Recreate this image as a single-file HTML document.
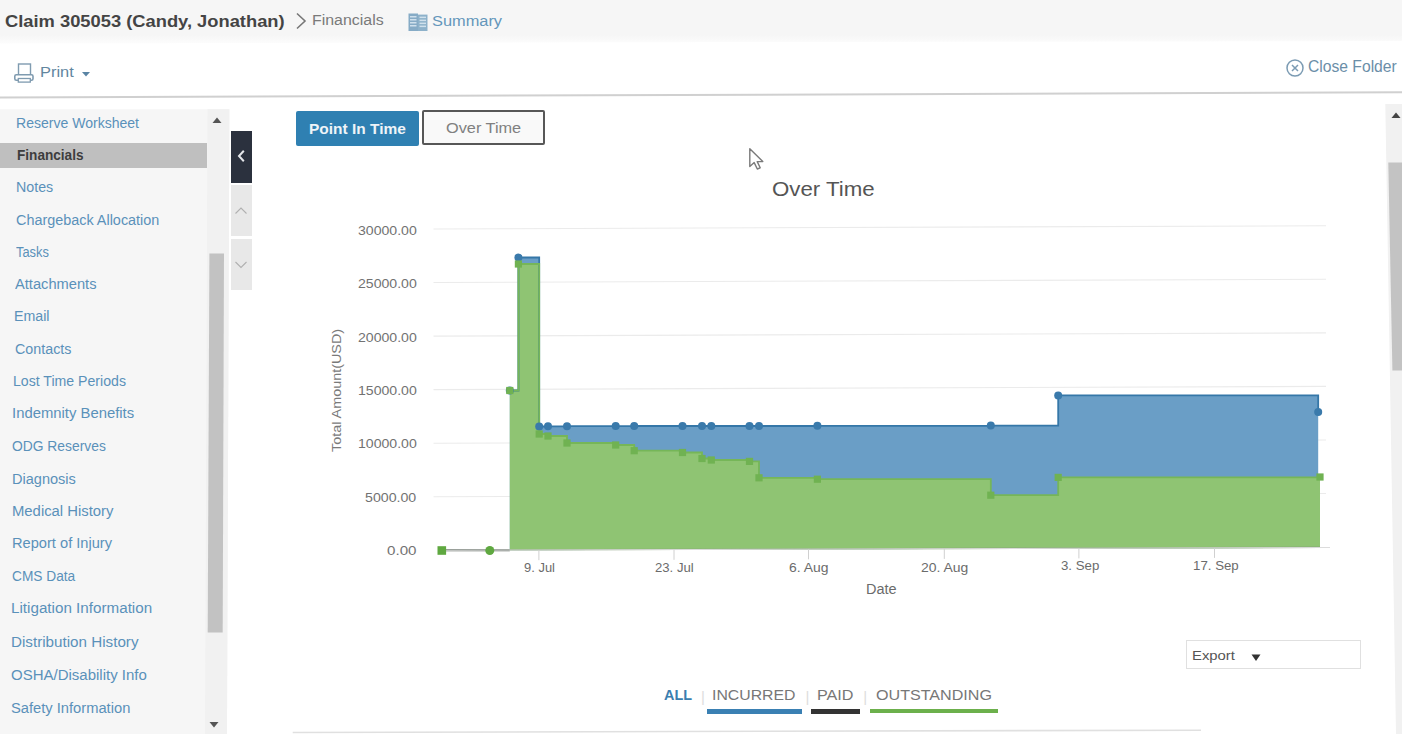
<!DOCTYPE html>
<html><head><meta charset="utf-8">
<style>
html,body{margin:0;padding:0;}
body{width:1402px;height:734px;overflow:hidden;position:relative;background:#fff;font-family:"Liberation Sans",sans-serif;}
.abs{position:absolute;}
.t{position:absolute;white-space:nowrap;}
#hdr{position:absolute;left:0;top:0;width:1402px;height:42px;background:#f4f4f4;}
#navbg{position:absolute;left:0;top:109px;width:229px;height:625px;background:#f4f4f4;}
.nsel{position:absolute;left:0;width:207px;height:25px;background:#bfbfbf;}
#nscroll{position:absolute;left:207px;top:109px;width:22px;height:625px;background:#f0f0f0;}
#nthumb{position:absolute;left:208.5px;top:253.5px;width:15px;height:379px;background:#c2c2c2;}
#collapse{position:absolute;left:231px;top:130.5px;width:20.5px;height:52px;background:#2b313e;}
.ud{position:absolute;left:231px;width:20.5px;height:51px;background:#e8e8e8;}
#pit{position:absolute;left:295.5px;top:110.5px;width:123px;height:35px;background:#2f80b2;border-radius:2px;}
#ot{position:absolute;left:421.7px;top:110px;width:119.5px;height:30.7px;border:2px solid #575757;background:#f9f9f9;border-radius:2px;}
.chart{position:absolute;left:0;top:0;}
#export{position:absolute;left:1186px;top:640px;width:173px;height:26.5px;border:1px solid #e0e0e0;background:#fff;}
#rscroll{position:absolute;left:1386px;top:103px;width:16px;height:631px;background:#f1f1f1;}
#rthumb{position:absolute;left:1389px;top:163px;width:13px;height:207px;background:#c4c4c4;}
</style></head><body>
<svg class="abs" style="left:0;top:0" width="1402" height="50"><defs><linearGradient id="hg" x1="0" y1="0" x2="0" y2="50" gradientUnits="userSpaceOnUse"><stop offset="0.70" stop-color="#f6f6f6"/><stop offset="0.86" stop-color="#fcfcfc"/></linearGradient></defs><polygon points="0,0 1402,0 1402,41 0,43.4" fill="url(#hg)"/></svg>
<div class="t " style="left:5.00px;top:11.00px;font-size:16.8px;line-height:21px;font-weight:bold;color:#444444;letter-spacing:0.000px;transform:scaleX(1.0917);transform-origin:0 0;">Claim 305053 (Candy, Jonathan)</div>
<svg class="abs" style="left:294px;top:12px" width="14" height="18" viewBox="0 0 14 18"><path d="M3,1.5 L11,9 L3,16.5" fill="none" stroke="#777" stroke-width="1.6"/></svg>
<div class="t " style="left:311.76px;top:11.00px;font-size:14px;line-height:18px;font-weight:normal;color:#7a7a7a;letter-spacing:0.000px;transform:scaleX(1.1366);transform-origin:0 0;">Financials</div>
<svg class="abs" style="left:408px;top:12.5px" width="20" height="19" viewBox="0 0 20 19"><rect x="0.5" y="0.5" width="9.5" height="17.5" fill="#86abc6"/><rect x="10" y="1.6" width="9.5" height="16.4" fill="#8db1ca"/><rect x="2" y="3" width="6.5" height="1.5" fill="#cfe0ec"/><rect x="11.5" y="3.6" width="6.5" height="1.5" fill="#cfe0ec"/><rect x="2" y="6" width="6.5" height="1.5" fill="#cfe0ec"/><rect x="11.5" y="6.6" width="6.5" height="1.5" fill="#cfe0ec"/><rect x="2" y="9" width="6.5" height="1.5" fill="#cfe0ec"/><rect x="11.5" y="9.6" width="6.5" height="1.5" fill="#cfe0ec"/><rect x="2" y="12" width="6.5" height="1.5" fill="#cfe0ec"/><rect x="11.5" y="12.6" width="6.5" height="1.5" fill="#cfe0ec"/></svg>
<div class="t " style="left:431.60px;top:11.00px;font-size:15.3px;line-height:19px;font-weight:normal;color:#6496bb;letter-spacing:0.000px;transform:scaleX(1.0700);transform-origin:0 0;">Summary</div>
<svg class="abs" style="left:12px;top:60px" width="24" height="26" viewBox="0 0 24 26"><rect x="6.5" y="4" width="12" height="11" fill="none" stroke="#7f9bb0" stroke-width="1.4"/><rect x="2.8" y="14.8" width="18.2" height="5.5" rx="1.5" fill="#fff" stroke="#7f9bb0" stroke-width="1.6"/><rect x="6.3" y="18.5" width="12" height="3.6" fill="#fff" stroke="#7f9bb0" stroke-width="1.3"/></svg>
<div class="t " style="left:39.93px;top:62.30px;font-size:15.3px;line-height:19px;font-weight:normal;color:#62869f;letter-spacing:0.000px;transform:scaleX(1.0736);transform-origin:0 0;">Print</div>
<svg class="abs" style="left:81px;top:71px" width="10" height="6" viewBox="0 0 10 6"><path d="M1,1 L9,1 L5,5.5 Z" fill="#5a84a4"/></svg>
<svg class="abs" style="left:1285px;top:58px" width="20" height="20" viewBox="0 0 20 20"><circle cx="10" cy="10" r="8" fill="none" stroke="#7b9bb3" stroke-width="1.5"/><path d="M7,7 L13,13 M13,7 L7,13" stroke="#7b9bb3" stroke-width="1.5"/></svg>
<div class="t " style="left:1307.90px;top:57.20px;font-size:16px;line-height:20px;font-weight:normal;color:#6b8ea8;letter-spacing:0.000px;transform:scaleX(0.9784);transform-origin:0 0;">Close Folder</div>
<svg class="abs" style="left:0;top:88px" width="1402" height="14"><line x1="0" y1="9.5" x2="1402" y2="4.3" stroke="#d0d0d0" stroke-width="2"/></svg>
<svg class="abs" style="left:0;top:100px" width="240" height="634"><polygon points="0,9.3 229.4,9.3 227,634 0,634" fill="#f6f6f6"/></svg>
<div class="nsel" style="top:143px"></div>
<div class="t " style="left:15.90px;top:113.70px;font-size:14px;line-height:18px;font-weight:normal;color:#5a91ba;letter-spacing:0.000px;transform:scaleX(1.0026);transform-origin:0 0;">Reserve Worksheet</div>
<div class="t " style="left:16.60px;top:146.60px;font-size:13.8px;line-height:17px;font-weight:bold;color:#3d3d3d;letter-spacing:0.000px;transform:scaleX(0.9852);transform-origin:0 0;">Financials</div>
<div class="t " style="left:15.88px;top:178.20px;font-size:14px;line-height:18px;font-weight:normal;color:#5a91ba;letter-spacing:0.000px;transform:scaleX(1.0176);transform-origin:0 0;">Notes</div>
<div class="t " style="left:16.10px;top:210.70px;font-size:14px;line-height:18px;font-weight:normal;color:#5a91ba;letter-spacing:0.000px;transform:scaleX(1.0287);transform-origin:0 0;">Chargeback Allocation</div>
<div class="t " style="left:15.60px;top:242.70px;font-size:14px;line-height:18px;font-weight:normal;color:#5a91ba;letter-spacing:0.000px;transform:scaleX(0.9166);transform-origin:0 0;">Tasks</div>
<div class="t " style="left:14.80px;top:275.00px;font-size:14px;line-height:18px;font-weight:normal;color:#5a91ba;letter-spacing:0.000px;transform:scaleX(1.0474);transform-origin:0 0;">Attachments</div>
<div class="t " style="left:13.79px;top:307.40px;font-size:14px;line-height:18px;font-weight:normal;color:#5a91ba;letter-spacing:0.000px;transform:scaleX(1.0149);transform-origin:0 0;">Email</div>
<div class="t " style="left:14.80px;top:339.70px;font-size:14px;line-height:18px;font-weight:normal;color:#5a91ba;letter-spacing:0.000px;transform:scaleX(1.0209);transform-origin:0 0;">Contacts</div>
<div class="t " style="left:13.09px;top:372.10px;font-size:14px;line-height:18px;font-weight:normal;color:#5a91ba;letter-spacing:0.000px;transform:scaleX(1.0081);transform-origin:0 0;">Lost Time Periods</div>
<div class="t " style="left:12.44px;top:403.90px;font-size:14px;line-height:18px;font-weight:normal;color:#5a91ba;letter-spacing:0.000px;transform:scaleX(1.0607);transform-origin:0 0;">Indemnity Benefits</div>
<div class="t " style="left:12.30px;top:436.90px;font-size:14px;line-height:18px;font-weight:normal;color:#5a91ba;letter-spacing:0.000px;transform:scaleX(0.9883);transform-origin:0 0;">ODG Reserves</div>
<div class="t " style="left:12.46px;top:469.50px;font-size:14px;line-height:18px;font-weight:normal;color:#5a91ba;letter-spacing:0.000px;transform:scaleX(1.0384);transform-origin:0 0;">Diagnosis</div>
<div class="t " style="left:11.94px;top:502.40px;font-size:14px;line-height:18px;font-weight:normal;color:#5a91ba;letter-spacing:0.000px;transform:scaleX(1.0603);transform-origin:0 0;">Medical History</div>
<div class="t " style="left:11.75px;top:534.20px;font-size:14px;line-height:18px;font-weight:normal;color:#5a91ba;letter-spacing:0.000px;transform:scaleX(1.0453);transform-origin:0 0;">Report of Injury</div>
<div class="t " style="left:12.20px;top:567.10px;font-size:14px;line-height:18px;font-weight:normal;color:#5a91ba;letter-spacing:0.000px;transform:scaleX(0.9786);transform-origin:0 0;">CMS Data</div>
<div class="t " style="left:11.11px;top:599.40px;font-size:14px;line-height:18px;font-weight:normal;color:#5a91ba;letter-spacing:0.000px;transform:scaleX(1.0860);transform-origin:0 0;">Litigation Information</div>
<div class="t " style="left:10.71px;top:632.90px;font-size:14px;line-height:18px;font-weight:normal;color:#5a91ba;letter-spacing:0.000px;transform:scaleX(1.0852);transform-origin:0 0;">Distribution History</div>
<div class="t " style="left:10.60px;top:665.50px;font-size:14px;line-height:18px;font-weight:normal;color:#5a91ba;letter-spacing:0.000px;transform:scaleX(1.0714);transform-origin:0 0;">OSHA/Disability Info</div>
<div class="t " style="left:11.20px;top:698.60px;font-size:14px;line-height:18px;font-weight:normal;color:#5a91ba;letter-spacing:0.000px;transform:scaleX(1.0503);transform-origin:0 0;">Safety Information</div>
<svg class="abs" style="left:0;top:100px" width="240" height="634"><polygon points="207.5,9.3 229.4,9.3 227,634 205,634" fill="#f1f1f1"/><polygon points="209.4,153.6 224,153.6 222.7,532.4 207.7,532.4" fill="#c2c2c2"/></svg>
<svg class="abs" style="left:211px;top:115px" width="12" height="10"><path d="M1.5,8 L6,2.5 L10.5,8 Z" fill="#555"/></svg>
<svg class="abs" style="left:208px;top:720px" width="12" height="10"><path d="M1.5,2 L6,7.5 L10.5,2 Z" fill="#555"/></svg>
<div id="collapse"></div>
<svg class="abs" style="left:234px;top:148px" width="14" height="16"><path d="M9.8,2.8 L5,8 L9.8,13.2" fill="none" stroke="#e4e6ea" stroke-width="2"/></svg>
<div class="ud" style="top:185px"></div>
<div class="ud" style="top:239px"></div>
<svg class="abs" style="left:234px;top:205px" width="14" height="12"><path d="M1.5,8.5 L7,3 L12.5,8.5" fill="none" stroke="#b0b0b0" stroke-width="1.1"/></svg>
<svg class="abs" style="left:234px;top:259px" width="14" height="12"><path d="M1.5,3 L7,8.5 L12.5,3" fill="none" stroke="#b0b0b0" stroke-width="1.1"/></svg>
<div id="pit"></div>
<div class="t " style="left:308.97px;top:118.70px;font-size:15px;line-height:19px;font-weight:bold;color:#eef4f8;letter-spacing:0.000px;transform:scaleX(1.0307);transform-origin:0 0;">Point In Time</div>
<div id="ot"></div>
<div class="t " style="left:446.40px;top:118.10px;font-size:15px;line-height:19px;font-weight:normal;color:#808080;letter-spacing:0.000px;transform:scaleX(1.0867);transform-origin:0 0;">Over Time</div>
<svg class="abs" style="left:748px;top:147px" width="18" height="26"><path d="M1.8,1.8 L1.8,19.5 L6.2,15.6 L9.3,22 L12.2,20.8 L9.2,14.6 L14.8,14.6 Z" fill="#fff" stroke="#7a7a7a" stroke-width="1.4" stroke-linejoin="round"/></svg>
<div class="t " style="left:772.30px;top:176.90px;font-size:20px;line-height:25px;font-weight:normal;color:#555;letter-spacing:0.000px;transform:scaleX(1.1138);transform-origin:0 0;">Over Time</div>
<svg class="chart" width="1402" height="734" viewBox="0 0 1402 734">
<line x1="433.5" y1="496.7" x2="1326" y2="493.5" stroke="#ebebeb" stroke-width="1.1"/>
<line x1="433.5" y1="443.2" x2="1326" y2="440.0" stroke="#ebebeb" stroke-width="1.1"/>
<line x1="433.5" y1="389.6" x2="1326" y2="386.4" stroke="#ebebeb" stroke-width="1.1"/>
<line x1="433.5" y1="336.1" x2="1326" y2="332.9" stroke="#ebebeb" stroke-width="1.1"/>
<line x1="433.5" y1="282.5" x2="1326" y2="279.3" stroke="#ebebeb" stroke-width="1.1"/>
<line x1="433.5" y1="229.0" x2="1326" y2="225.8" stroke="#ebebeb" stroke-width="1.1"/>
<path d="M509.8,550.36 L509.8,390.5 L518.4,390.5 L518.4,257.5 L539.2,257.5 L539.2,426.5 L548,426.5 L548,426.3 L567,426.3 L567,426.2 L615.7,426.2 L615.7,426.1 L634.2,426.1 L634.2,426 L682.5,426 L682.5,426 L702,426 L702,426 L711.3,426 L711.3,426 L749.5,426 L749.5,426 L759,426 L759,426 L817.4,426 L817.4,425.8 L990.8,425.8 L990.8,425.6 L1058.2,425.6 L1058.2,395.4 L1318.2,395.4 L1318.2,412 L1318.2,547.86 Z" fill="#6a9ec6"/>
<path d="M509.8,550.36 L509.8,390.5 L518.4,390.5 L518.4,264 L539.2,264 L539.2,434 L548,434 L548,436 L567,436 L567,443 L615.7,443 L615.7,445 L634.2,445 L634.2,450.7 L682.5,450.7 L682.5,452.5 L702,452.5 L702,458.5 L711.3,458.5 L711.3,460 L749.5,460 L749.5,461.4 L759,461.4 L759,477.8 L817.4,477.8 L817.4,479.2 L990.8,479.2 L990.8,495.2 L1058.2,495.2 L1058.2,477.4 L1320,477.4 L1320,477 L1320,547.85 Z" fill="#8fc473"/>
<path d="M509.8,390.5 L518.4,390.5 L518.4,257.5 L539.2,257.5 L539.2,426.5 L548,426.5 L548,426.3 L567,426.3 L567,426.2 L615.7,426.2 L615.7,426.1 L634.2,426.1 L634.2,426 L682.5,426 L682.5,426 L702,426 L702,426 L711.3,426 L711.3,426 L749.5,426 L749.5,426 L759,426 L759,426 L817.4,426 L817.4,425.8 L990.8,425.8 L990.8,425.6 L1058.2,425.6 L1058.2,395.4 L1318.2,395.4 L1318.2,412" fill="none" stroke="#3577a8" stroke-width="1.8"/>
<path d="M509.8,390.5 L518.4,390.5 L518.4,264 L539.2,264 L539.2,434 L548,434 L548,436 L567,436 L567,443 L615.7,443 L615.7,445 L634.2,445 L634.2,450.7 L682.5,450.7 L682.5,452.5 L702,452.5 L702,458.5 L711.3,458.5 L711.3,460 L749.5,460 L749.5,461.4 L759,461.4 L759,477.8 L817.4,477.8 L817.4,479.2 L990.8,479.2 L990.8,495.2 L1058.2,495.2 L1058.2,477.4 L1320,477.4 L1320,477" fill="none" stroke="#76b658" stroke-width="1.8"/>
<path d="M441.8,550.2 L509.8,550.2" stroke="#5f6a60" stroke-width="2"/>
<path d="M509.8,549.9 L1320,547.3" stroke="#86a878" stroke-width="1.4"/>
<line x1="446" y1="550.3" x2="1330" y2="547.5" stroke="#dcdcdc" stroke-width="1"/>
<line x1="538.9" y1="550.2" x2="538.9" y2="560.2" stroke="#d0d0d0" stroke-width="1"/>
<line x1="674" y1="549.8" x2="674" y2="559.8" stroke="#d0d0d0" stroke-width="1"/>
<line x1="808.5" y1="549.3" x2="808.5" y2="559.3" stroke="#d0d0d0" stroke-width="1"/>
<line x1="944.3" y1="548.9" x2="944.3" y2="558.9" stroke="#d0d0d0" stroke-width="1"/>
<line x1="1078.9" y1="548.4" x2="1078.9" y2="558.4" stroke="#d0d0d0" stroke-width="1"/>
<line x1="1214.5" y1="547.9" x2="1214.5" y2="557.9" stroke="#d0d0d0" stroke-width="1"/>
<circle cx="509.8" cy="390.5" r="4" fill="#3a7aab"/>
<circle cx="518.4" cy="257.5" r="4" fill="#3a7aab"/>
<circle cx="539.2" cy="426.5" r="4" fill="#3a7aab"/>
<circle cx="548" cy="426.3" r="4" fill="#3a7aab"/>
<circle cx="567" cy="426.2" r="4" fill="#3a7aab"/>
<circle cx="615.7" cy="426.1" r="4" fill="#3a7aab"/>
<circle cx="634.2" cy="426" r="4" fill="#3a7aab"/>
<circle cx="682.5" cy="426" r="4" fill="#3a7aab"/>
<circle cx="702" cy="426" r="4" fill="#3a7aab"/>
<circle cx="711.3" cy="426" r="4" fill="#3a7aab"/>
<circle cx="749.5" cy="426" r="4" fill="#3a7aab"/>
<circle cx="759" cy="426" r="4" fill="#3a7aab"/>
<circle cx="817.4" cy="425.8" r="4" fill="#3a7aab"/>
<circle cx="990.8" cy="425.6" r="4" fill="#3a7aab"/>
<circle cx="1058.2" cy="395.4" r="4" fill="#3a7aab"/>
<circle cx="1318.2" cy="412" r="4" fill="#3a7aab"/>
<rect x="506.2" y="386.9" width="7.2" height="7.2" fill="#70b252"/>
<rect x="514.8" y="260.4" width="7.2" height="7.2" fill="#70b252"/>
<rect x="535.6" y="430.4" width="7.2" height="7.2" fill="#70b252"/>
<rect x="544.4" y="432.4" width="7.2" height="7.2" fill="#70b252"/>
<rect x="563.4" y="439.4" width="7.2" height="7.2" fill="#70b252"/>
<rect x="612.1" y="441.4" width="7.2" height="7.2" fill="#70b252"/>
<rect x="630.6" y="447.09999999999997" width="7.2" height="7.2" fill="#70b252"/>
<rect x="678.9" y="448.9" width="7.2" height="7.2" fill="#70b252"/>
<rect x="698.4" y="454.9" width="7.2" height="7.2" fill="#70b252"/>
<rect x="707.6999999999999" y="456.4" width="7.2" height="7.2" fill="#70b252"/>
<rect x="745.9" y="457.79999999999995" width="7.2" height="7.2" fill="#70b252"/>
<rect x="755.4" y="474.2" width="7.2" height="7.2" fill="#70b252"/>
<rect x="813.8" y="475.59999999999997" width="7.2" height="7.2" fill="#70b252"/>
<rect x="987.1999999999999" y="491.59999999999997" width="7.2" height="7.2" fill="#70b252"/>
<rect x="1054.6000000000001" y="473.79999999999995" width="7.2" height="7.2" fill="#70b252"/>
<rect x="1316.4" y="473.4" width="7.2" height="7.2" fill="#70b252"/>
<rect x="437.5" y="546.2" width="8.6" height="8.6" fill="#5fa840"/>
<circle cx="489.8" cy="550.5" r="4.5" fill="#5fa840"/>
</svg>
<div class="t " style="left:357.50px;top:222.70px;font-size:13px;line-height:16px;font-weight:normal;color:#727272;letter-spacing:0.000px;transform:scaleX(1.0835);transform-origin:0 0;">30000.00</div>
<div class="t " style="left:357.50px;top:276.20px;font-size:13px;line-height:16px;font-weight:normal;color:#727272;letter-spacing:0.000px;transform:scaleX(1.0835);transform-origin:0 0;">25000.00</div>
<div class="t " style="left:357.50px;top:329.70px;font-size:13px;line-height:16px;font-weight:normal;color:#727272;letter-spacing:0.000px;transform:scaleX(1.0835);transform-origin:0 0;">20000.00</div>
<div class="t " style="left:357.50px;top:383.40px;font-size:13px;line-height:16px;font-weight:normal;color:#727272;letter-spacing:0.000px;transform:scaleX(1.0835);transform-origin:0 0;">15000.00</div>
<div class="t " style="left:357.50px;top:435.90px;font-size:13px;line-height:16px;font-weight:normal;color:#727272;letter-spacing:0.000px;transform:scaleX(1.0835);transform-origin:0 0;">10000.00</div>
<div class="t " style="left:365.00px;top:489.50px;font-size:13px;line-height:16px;font-weight:normal;color:#727272;letter-spacing:0.000px;transform:scaleX(1.0906);transform-origin:0 0;">5000.00</div>
<div class="t " style="left:386.80px;top:543.00px;font-size:13px;line-height:16px;font-weight:normal;color:#727272;letter-spacing:0.000px;transform:scaleX(1.1647);transform-origin:0 0;">0.00</div>
<div class="t ytitle" style="left:329.20px;top:451.50px;font-size:12.8px;line-height:16px;font-weight:normal;color:#7a7a7a;transform:rotate(-90deg) scaleX(1.1240);transform-origin:0 0;">Total Amount(USD)</div>
<div class="t " style="left:523.60px;top:560.30px;font-size:13px;line-height:16px;font-weight:normal;color:#6b6b6b;letter-spacing:0.000px;transform:scaleX(0.9973);transform-origin:0 0;">9. Jul</div>
<div class="t " style="left:655.00px;top:560.30px;font-size:13px;line-height:16px;font-weight:normal;color:#6b6b6b;letter-spacing:0.000px;transform:scaleX(1.0101);transform-origin:0 0;">23. Jul</div>
<div class="t " style="left:789.10px;top:560.30px;font-size:13px;line-height:16px;font-weight:normal;color:#6b6b6b;letter-spacing:0.000px;transform:scaleX(1.0708);transform-origin:0 0;">6. Aug</div>
<div class="t " style="left:920.80px;top:560.10px;font-size:13px;line-height:16px;font-weight:normal;color:#6b6b6b;letter-spacing:0.000px;transform:scaleX(1.0721);transform-origin:0 0;">20. Aug</div>
<div class="t " style="left:1061.20px;top:558.10px;font-size:13px;line-height:16px;font-weight:normal;color:#6b6b6b;letter-spacing:0.000px;transform:scaleX(1.0200);transform-origin:0 0;">3. Sep</div>
<div class="t " style="left:1193.00px;top:558.10px;font-size:13px;line-height:16px;font-weight:normal;color:#6b6b6b;letter-spacing:0.000px;transform:scaleX(1.0205);transform-origin:0 0;">17. Sep</div>
<div class="t " style="left:865.66px;top:580.10px;font-size:14px;line-height:18px;font-weight:normal;color:#6b6b6b;letter-spacing:0.000px;transform:scaleX(1.0352);transform-origin:0 0;">Date</div>
<div id="export"></div>
<div class="t " style="left:1191.70px;top:647.20px;font-size:13.5px;line-height:17px;font-weight:normal;color:#555;letter-spacing:0.000px;transform:scaleX(1.1002);transform-origin:0 0;">Export</div>
<svg class="abs" style="left:1251px;top:654px" width="10" height="8"><path d="M0.5,0.5 L9.5,0.5 L5,7 Z" fill="#333"/></svg>
<div class="t " style="left:663.50px;top:685.40px;font-size:15.5px;line-height:19px;font-weight:bold;color:#3b7eaf;letter-spacing:0.000px;transform:scaleX(0.9305);transform-origin:0 0;">ALL</div>
<div class="t " style="left:701.00px;top:687.00px;font-size:15px;line-height:19px;font-weight:normal;color:#ddd;letter-spacing:0.000px;">|</div>
<div class="t " style="left:712.48px;top:685.40px;font-size:15.5px;line-height:19px;font-weight:normal;color:#777;letter-spacing:0.000px;transform:scaleX(1.0197);transform-origin:0 0;">INCURRED</div>
<div class="t " style="left:805.50px;top:687.00px;font-size:15px;line-height:19px;font-weight:normal;color:#ddd;letter-spacing:0.000px;">|</div>
<div class="t " style="left:817.16px;top:685.40px;font-size:15.5px;line-height:19px;font-weight:normal;color:#777;letter-spacing:0.000px;transform:scaleX(1.0434);transform-origin:0 0;">PAID</div>
<div class="t " style="left:863.30px;top:687.00px;font-size:15px;line-height:19px;font-weight:normal;color:#ddd;letter-spacing:0.000px;">|</div>
<div class="t " style="left:876.00px;top:685.40px;font-size:15.5px;line-height:19px;font-weight:normal;color:#777;letter-spacing:0.000px;transform:scaleX(1.0389);transform-origin:0 0;">OUTSTANDING</div>
<div class="abs" style="left:707px;top:709.4px;width:95px;height:4.5px;background:#3a80b3"></div>
<div class="abs" style="left:811px;top:709px;width:49px;height:4.5px;background:#333"></div>
<div class="abs" style="left:870px;top:708.5px;width:128px;height:4.5px;background:#6cb04c"></div>
<svg class="abs" style="left:0;top:720px" width="1402" height="14"><line x1="292.7" y1="12.5" x2="1201" y2="10.2" stroke="#e0e0e0" stroke-width="1.6"/></svg>
<svg class="abs" style="left:1300px;top:0" width="102" height="734"><polygon points="85.3,104 102,104 102,734 96,734" fill="#f1f1f1"/><polygon points="88.3,162.4 102,162.4 102,370.5 92.4,370.5" fill="#c3c3c3"/></svg>
<svg class="abs" style="left:1390px;top:110px" width="12" height="10"><path d="M1.5,8 L6,2.5 L10.5,8 Z" fill="#444"/></svg>
</body></html>
